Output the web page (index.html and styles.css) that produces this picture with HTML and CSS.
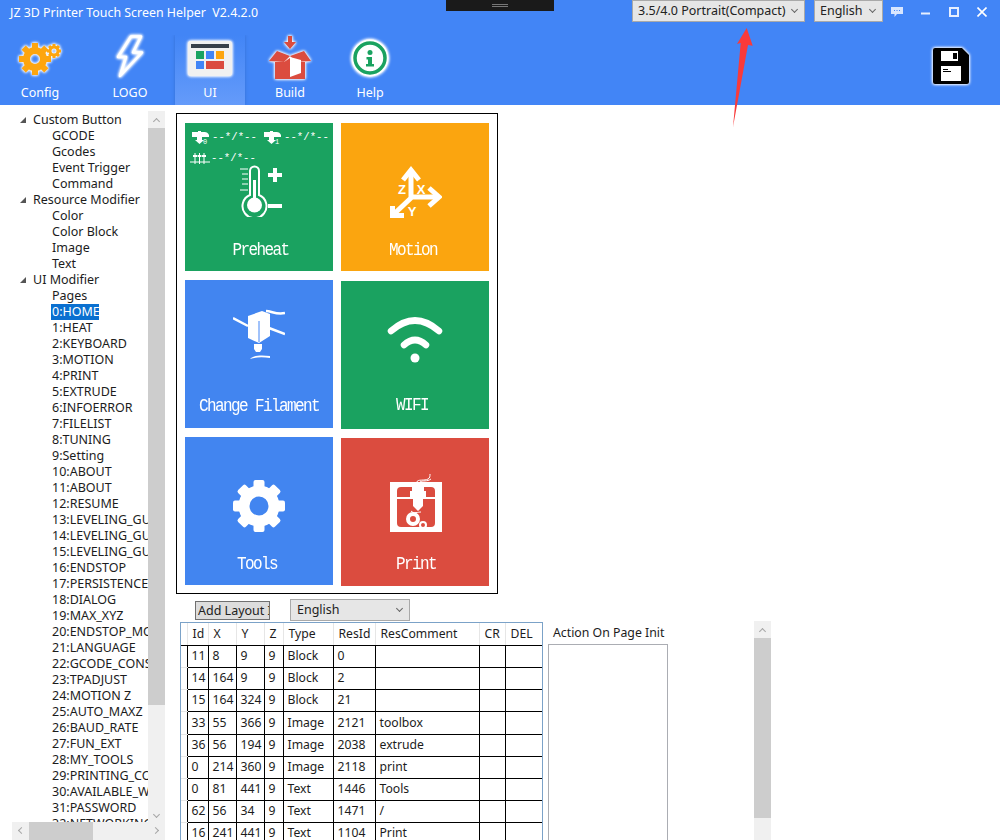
FILE: index.html
```html
<!DOCTYPE html>
<html lang="en">
<head>
  <meta charset="UTF-8" />
  <title>JZ 3D Printer Touch Screen Helper</title>
  <link rel="stylesheet" href="styles.css">
</head>
<body>

  <header class="header">
    <div class="titlebar">
      <span class="app-title">JZ 3D Printer Touch Screen Helper  V2.4.2.0</span>
      <div class="combo combo-layout">3.5/4.0 Portrait(Compact)<i class="chev"></i></div>
      <div class="combo combo-lang">English<i class="chev"></i></div>
      <div class="win-buttons">
        <svg width="12" height="10" viewBox="0 0 12 10"><path d="M0 0h12v7H6L3.500 10V7H0z" fill="#d8e6ff"/><path d="M3 3.500h1M5.500 3.500h1M8 3.500h1" stroke="#4285f6"/></svg>
        <svg width="10" height="10" viewBox="0 0 10 10"><path d="M0 6.500h9" stroke="#e6efff" stroke-width="2"/></svg>
        <svg width="10" height="10" viewBox="0 0 10 10"><rect x="1" y="1" width="8" height="8" fill="none" stroke="#e6efff" stroke-width="2"/></svg>
        <svg width="10" height="10" viewBox="0 0 10 10"><path d="M.5.500l9 9M9.500.500l-9 9" stroke="#fff" stroke-width="1.600"/></svg>
      </div>
    </div>

    <nav class="toolbar">
      <a class="tool tool-config">
        <svg class="glow" width="46" height="40" viewBox="0 0 46 40">
          <g transform="translate(18 22)" fill="#fda50f">
            <circle r="8.500" fill="none" stroke="#fda50f" stroke-width="7"/>
            <rect x="-3" y="-16" width="6" height="6"/><rect x="-3" y="10" width="6" height="6"/>
            <rect x="-16" y="-3" width="6" height="6"/><rect x="10" y="-3" width="6" height="6"/>
            <rect x="-3" y="-16" width="6" height="6" transform="rotate(45)"/><rect x="-3" y="10" width="6" height="6" transform="rotate(45)"/>
            <rect x="-16" y="-3" width="6" height="6" transform="rotate(45)"/><rect x="10" y="-3" width="6" height="6" transform="rotate(45)"/>
          </g>
          <g transform="translate(37 14)" fill="#fda50f">
            <circle r="4" fill="none" stroke="#fda50f" stroke-width="3"/>
            <rect x="-1.500" y="-7" width="3" height="3"/><rect x="-1.500" y="4" width="3" height="3"/>
            <rect x="-7" y="-1.500" width="3" height="3"/><rect x="4" y="-1.500" width="3" height="3"/>
            <rect x="-1.500" y="-7" width="3" height="3" transform="rotate(45)"/><rect x="-1.500" y="4" width="3" height="3" transform="rotate(45)"/>
            <rect x="-7" y="-1.500" width="3" height="3" transform="rotate(45)"/><rect x="4" y="-1.500" width="3" height="3" transform="rotate(45)"/>
          </g>
        </svg>
        <span>Config</span>
      </a>
      <a class="tool">
        <svg class="glow" width="30" height="44" viewBox="0 0 30 44">
          <path d="M16 1.500h10l-8 16h9L5 41l6-19H3z" fill="none" stroke="#fff" stroke-width="2.500" stroke-linejoin="round"/>
        </svg>
        <span>LOGO</span>
      </a>
      <a class="tool active tool-down">
        <svg class="glow" width="44" height="36" viewBox="0 0 44 36">
          <rect width="44" height="35" rx="3" fill="#f1f1f1"/>
          <rect x="3" y="3" width="38" height="4" fill="#37404a"/>
          <rect x="8" y="10" width="8" height="8" fill="#1aa260"/>
          <rect x="18" y="10" width="8" height="8" fill="#4285f6"/>
          <rect x="28" y="10" width="8" height="8" fill="#fda50f"/>
          <rect x="8" y="20" width="8" height="8" fill="#4285f6"/>
          <rect x="18" y="20" width="18" height="8" fill="#db4c3f"/>
        </svg>
        <span>UI</span>
      </a>
      <a class="tool tool-build">
        <svg class="glow" width="44" height="44" viewBox="0 0 44 44">
          <path d="M20 0h4v6h4l-6 7-6-7h4z" fill="#db4c3f"/>
          <path d="M1 25l8-10 13 5-6 6zM43 25l-7-10-14 5 6 6z" fill="#db4c3f"/>
          <path d="M7 26h9l6-4v21H7z" fill="#db4c3f"/>
          <path d="M22 22l6 4h9v17H22z" fill="#db4c3f"/>
          <path d="M22 21l11 3v13l-11 4z" fill="#fff"/>
        </svg>
        <span>Build</span>
      </a>
      <a class="tool tool-build">
        <svg class="glow" width="38" height="40" viewBox="0 0 38 40">
          <circle cx="19" cy="20" r="18.500" fill="#fff"/>
          <circle cx="19" cy="20" r="15" fill="none" stroke="#1aa260" stroke-width="3.500"/>
          <circle cx="19" cy="14.500" r="2.500" fill="#1aa260"/>
          <path d="M15.500 19h5.500v7h2v2.500h-8V26h2v-4.500h-1.500z" fill="#1aa260"/>
        </svg>
        <span>Help</span>
      </a>
      <svg class="save glow" width="36" height="36" viewBox="0 0 36 36">
        <path d="M0 2a2 2 0 0 1 2-2h27l7 7v27a2 2 0 0 1-2 2H2a2 2 0 0 1-2-2z" fill="#000"/>
        <rect x="8" y="3" width="17" height="10" fill="#fff"/>
        <rect x="20" y="5" width="4" height="6" fill="#000"/>
        <rect x="8" y="18" width="20" height="15" fill="#fff"/>
        <path d="M10 21.500h5M10 23.500h8" stroke="#000"/>
      </svg>
    </nav>
  </header>

  <!-- red arrow drawn on the screenshot -->
  <svg class="arrow" width="30" height="105" viewBox="0 0 30 105">
    <path d="M18.700 3L24.700 20.700 20 20 5 102 12.700 18 9 19z" fill="#f93a3a"/>
  </svg>
  <div class="black-tab"><i></i></div>

  <main class="main">
    <aside class="tree">
      <ul class="tree-list">
        <li class="parent">Custom Button</li>
        <li>GCODE</li>
        <li>Gcodes</li>
        <li>Event Trigger</li>
        <li>Command</li>
        <li class="parent">Resource Modifier</li>
        <li>Color</li>
        <li>Color Block</li>
        <li>Image</li>
        <li>Text</li>
        <li class="parent">UI Modifier</li>
        <li>Pages</li>
        <li><span class="selected">0:HOME</span></li>
        <li>1:HEAT</li>
        <li>2:KEYBOARD</li>
        <li>3:MOTION</li>
        <li>4:PRINT</li>
        <li>5:EXTRUDE</li>
        <li>6:INFOERROR</li>
        <li>7:FILELIST</li>
        <li>8:TUNING</li>
        <li>9:Setting</li>
        <li>10:ABOUT</li>
        <li>11:ABOUT</li>
        <li>12:RESUME</li>
        <li>13:LEVELING_GUIDE</li>
        <li>14:LEVELING_GUIDE</li>
        <li>15:LEVELING_GUIDE</li>
        <li>16:ENDSTOP</li>
        <li>17:PERSISTENCE</li>
        <li>18:DIALOG</li>
        <li>19:MAX_XYZ</li>
        <li>20:ENDSTOP_MONITOR</li>
        <li>21:LANGUAGE</li>
        <li>22:GCODE_CONSOLE</li>
        <li>23:TPADJUST</li>
        <li>24:MOTION Z</li>
        <li>25:AUTO_MAXZ</li>
        <li>26:BAUD_RATE</li>
        <li>27:FUN_EXT</li>
        <li>28:MY_TOOLS</li>
        <li>29:PRINTING_CONTROL</li>
        <li>30:AVAILABLE_WIFI</li>
        <li>31:PASSWORD</li>
        <li>32:NETWORKING</li>
      </ul>
      <div class="vbar tree-vbar">
        <b class="bar-btn"><i class="chev up"></i></b>
        <b class="bar-thumb"></b>
        <b class="bar-rest"></b>
        <b class="bar-btn"><i class="chev"></i></b>
      </div>
      <div class="hbar">
        <b class="bar-btn"><i class="chev left"></i></b>
        <b class="hbar-thumb"></b>
        <b class="bar-rest"></b>
        <b class="bar-btn"><i class="chev right"></i></b>
      </div>
    </aside>

    <section class="editor">
      <div class="screen">
        <div class="screen-col">
          <div class="tile green preheat">
            <div class="status">
              <svg width="17" height="13" viewBox="0 0 17 13"><path d="M0 1h6V0h3v1h3a5 5 0 0 1 5 3v2H0zM5 6h5v3h2l-4.500 4L3 9h2z" fill="#fff"/><text class="nozzle-no" x="11" y="13">0</text></svg><span class="st-a">--*/*--</span>
              <svg width="17" height="13" viewBox="0 0 17 13"><path d="M0 1h6V0h3v1h3a5 5 0 0 1 5 3v2H0zM5 6h5v3h2l-4.500 4L3 9h2z" fill="#fff"/><text class="nozzle-no" x="11" y="13">1</text></svg><span>--*/*--</span>
              <svg class="st-bed" width="20" height="12" viewBox="0 0 20 12"><path d="M0 9h20M5 0v11M9.500 0v11M14 0v11" stroke="#fff"/><path d="M3 3h4M7.500 3h4M12 3h4" stroke="#fff" stroke-width="2"/></svg><span>--*/*--</span>
            </div>
            <svg class="icon" width="52" height="52" viewBox="0 0 52 52">
              <path d="M14 30V6a4.500 4.500 0 0 1 9 0v24a12 12 0 1 1-9 0z" fill="none" stroke="#fff" stroke-width="2"/>
              <circle cx="18.500" cy="40" r="7.500" fill="#fff"/>
              <path d="M18.500 15v20" stroke="#fff" stroke-width="3"/>
              <path d="M4 4h8M6 9h6M6 14h6M6 19h6M4 25h8" stroke="#fff"/>
              <path d="M39 3v14M32 10h14M32 41h14" stroke="#fff" stroke-width="4"/>
            </svg>
            <span class="tile-label">Preheat</span>
          </div>
          <div class="tile blue filament">
            <svg class="icon" width="52" height="52" viewBox="0 0 52 52">
              <path d="M0 10l15 8M36 20l16 6M33 3c6 0 10 4 19 2" fill="none" stroke="#fff" stroke-width="2.500"/>
              <path d="M15 8l14-5 8 3v22l-11 7-11-5z" fill="#fff"/>
              <path d="M26 13v21" stroke="#4285f6"/>
              <path d="M21 36h8v5l-2 3h-4l-2-3z" fill="#fff"/>
              <path d="M17 51c3-4 12-4 20-3v2c-7-1-14-1-20 1z" fill="#fff"/>
            </svg>
            <span class="tile-label">Change Filament</span>
          </div>
          <div class="tile blue tools">
            <svg class="icon" width="52" height="52" viewBox="0 0 52 52">
              <circle cx="26" cy="26" r="15" fill="none" stroke="#fff" stroke-width="11"/>
              <g fill="#fff">
                <rect x="20.500" y="0" width="11" height="10" rx="2"/><rect x="20.500" y="42" width="11" height="10" rx="2"/>
                <rect x="0" y="20.500" width="10" height="11" rx="2"/><rect x="42" y="20.500" width="10" height="11" rx="2"/>
                <g transform="rotate(45 26 26)">
                  <rect x="20.500" y="0" width="11" height="10" rx="2"/><rect x="20.500" y="42" width="11" height="10" rx="2"/>
                  <rect x="0" y="20.500" width="10" height="11" rx="2"/><rect x="42" y="20.500" width="10" height="11" rx="2"/>
                </g>
              </g>
            </svg>
            <span class="tile-label">Tools</span>
          </div>
        </div>
        <div class="screen-col">
          <div class="tile orange motion">
            <svg class="icon" width="52" height="52" viewBox="0 0 52 52">
              <g fill="none" stroke="#fff" stroke-width="5">
                <path d="M21 4v28L4 48M21 31h28"/>
                <path d="M13 14l8-10 8 10M39 22l10 9-10 9"/>
                <path d="M2.500 40v9.500H14"/>
              </g>
              <g class="axis-text">
                <text x="12" y="28">Z</text>
                <text x="31" y="28">X</text>
                <text x="22" y="50">Y</text>
              </g>
            </svg>
            <span class="tile-label">Motion</span>
          </div>
          <div class="tile green wifi">
            <svg class="icon" width="60" height="50" viewBox="0 0 60 50">
              <g fill="none" stroke="#fff" stroke-width="6.500" stroke-linecap="round">
                <path d="M6 17Q30-4 54 17"/>
                <path d="M19 31Q30 21 41 31"/>
              </g>
              <circle cx="30" cy="44" r="4.500" fill="#fff"/>
            </svg>
            <span class="tile-label">WIFI</span>
          </div>
          <div class="tile red print">
            <svg class="icon" width="52" height="58" viewBox="0 0 52 58">
              <path d="M27 8c0-3 8-1 11-3 2-1 2-3 2-5M30 8c3-2 7 0 11-3" fill="none" stroke="#fff"/>
              <rect y="8" width="52" height="50" fill="#fff"/>
              <rect x="7" y="13" width="38" height="40" rx="4" fill="#db4c3f"/>
              <rect x="7" y="23" width="38" height="2" fill="#fff"/>
              <path d="M22 13h12v4h2v8h-3v7l-5 5-5-5v-7h-3v-8h2z" fill="#fff"/>
              <circle cx="23" cy="45" r="5" fill="none" stroke="#fff" stroke-width="4"/>
              <circle cx="33" cy="51" r="3" fill="none" stroke="#fff" stroke-width="2"/>
              <path d="M21 37c3 3 7 1 10 1" fill="none" stroke="#fff"/>
            </svg>
            <span class="tile-label">Print</span>
          </div>
        </div>
      </div>

      <div class="layout-bar">
        <button class="add-btn">Add Layout I</button>
        <div class="combo combo-page">English<i class="chev"></i></div>
      </div>

      <div class="lower">
        <div class="table-wrap">
          <table class="layout-table">
            <colgroup>
              <col class="c-gutter"><col class="c-id"><col class="c-x"><col class="c-y"><col class="c-z"><col class="c-type"><col class="c-res"><col class="c-comment"><col class="c-cr"><col class="c-del">
            </colgroup>
            <thead>
              <tr><th></th><th>Id</th><th>X</th><th>Y</th><th>Z</th><th>Type</th><th>ResId</th><th>ResComment</th><th>CR</th><th>DEL</th></tr>
            </thead>
            <tbody>
              <tr><th></th><td>11</td><td>8</td><td>9</td><td>9</td><td>Block</td><td>0</td><td></td><td></td><td></td></tr>
              <tr><th></th><td>14</td><td>164</td><td>9</td><td>9</td><td>Block</td><td>2</td><td></td><td></td><td></td></tr>
              <tr><th></th><td>15</td><td>164</td><td>324</td><td>9</td><td>Block</td><td>21</td><td></td><td></td><td></td></tr>
              <tr class="tall"><th></th><td>33</td><td>55</td><td>366</td><td>9</td><td>Image</td><td>2121</td><td>toolbox</td><td></td><td></td></tr>
              <tr><th></th><td>36</td><td>56</td><td>194</td><td>9</td><td>Image</td><td>2038</td><td>extrude</td><td></td><td></td></tr>
              <tr><th></th><td>0</td><td>214</td><td>360</td><td>9</td><td>Image</td><td>2118</td><td>print</td><td></td><td></td></tr>
              <tr><th></th><td>0</td><td>81</td><td>441</td><td>9</td><td>Text</td><td>1446</td><td>Tools</td><td></td><td></td></tr>
              <tr><th></th><td>62</td><td>56</td><td>34</td><td>9</td><td>Text</td><td>1471</td><td>/</td><td></td><td></td></tr>
              <tr><th></th><td>16</td><td>241</td><td>441</td><td>9</td><td>Text</td><td>1104</td><td>Print</td><td></td><td></td></tr>
            </tbody>
          </table>
        </div>

        <div class="action">
          <label>Action On Page Init</label>
          <div class="action-box"></div>
        </div>

        <div class="vbar page-vbar">
          <b class="bar-btn"><i class="chev up"></i></b>
          <b class="bar-thumb"></b>
          <b class="bar-rest"></b>
        </div>
      </div>
    </section>
  </main>

</body>
</html>
```

FILE: styles.css
```css
* {
  box-sizing: border-box;
}

html, body {
  height: 840px;
  overflow: hidden;
}

body {
  margin: 0;
  background-color: #ffffff;
  color: #1c1c1c;
  font-family: "Noto Sans", sans-serif;
  font-size: 12.5px;
  display: flex;
  flex-direction: column;
}

.header {
  background-color: #4285f6;
  height: 105px;
  flex: none;
}

.titlebar {
  display: flex;
  height: 35px;
  align-items: flex-start;
}

.app-title {
  color: #ffffff;
  font-size: 12.4px;
  white-space: pre;
  padding: 4px 0 0 10px;
  width: 632px;
  line-height: 18px;
}

.combo {
  position: relative;
  background-color: #e6e6e6;
  border: 1px solid #a9a9a9;
  color: #222;
  height: 22px;
  line-height: 19px;
  font-size: 12.5px;
  padding-left: 5px;
}

.combo-layout {
  width: 173px;
}

.combo-lang {
  width: 69px;
  margin-left: 9px;
}

.chev {
  position: absolute;
  top: 6px;
  right: 7px;
  width: 5px;
  height: 5px;
  border-right: 1px solid #666;
  border-bottom: 1px solid #666;
  transform: rotate(45deg);
}

.win-buttons {
  display: flex;
  align-items: center;
  gap: 18px;
  margin-left: 8px;
  padding-top: 7px;
}

.toolbar {
  display: flex;
  height: 70px;
  gap: 10px;
  padding-left: 5px;
}

.tool {
  width: 70px;
  height: 70px;
  display: flex;
  flex-direction: column;
  align-items: center;
  color: #ffffff;
  font-size: 12.5px;
  position: relative;
}

.tool svg {
  height: 44px;
  flex: none;
}

.tool span {
  position: absolute;
  bottom: 3px;
  line-height: 18px;
}

.tool-config {
  margin-right: 10px;
}

.tool-down svg {
  margin-top: 2px;
}

.tool-build svg {
  margin-top: 1px;
}

.active {
  background: linear-gradient(#4285f6, #659bfa);
  box-shadow: 0 0 3px rgba(30, 70, 150, 0.35);
  clip-path: inset(0 -4px 0 -4px);
}

.glow {
  filter: drop-shadow(0 0 1.5px #ffffff) drop-shadow(0 0 1px #ffffff);
}

.save {
  margin: 13px 0 0 518px;
}

.arrow {
  position: absolute;
  left: 728px;
  top: 25px;
}

.black-tab {
  position: absolute;
  left: 446px;
  top: 0;
  width: 108px;
  height: 11px;
  background-color: #1a1a1a;
}

.black-tab i {
  display: block;
  width: 16px;
  height: 3px;
  margin: 4px auto 0;
  border-top: 1px solid #777;
  border-bottom: 1px solid #777;
}

.main {
  display: flex;
  flex: 1;
  min-height: 0;
}

/* left tree */
.tree {
  width: 165px;
  margin: 6px 0 0 12px;
  flex: none;
  display: grid;
  grid-template-columns: 136px 17px;
  grid-template-rows: 711px 18px;
  overflow: hidden;
}

.tree-list {
  list-style: none;
  margin: 0;
  padding: 1px 0 0;
  overflow: hidden;
  width: 136px;
  height: 711px;
}

.tree-list li {
  height: 16px;
  line-height: 16px;
  padding-left: 40px;
  white-space: nowrap;
}

.tree-list .parent {
  padding-left: 21px;
  position: relative;
}

.tree-list .parent::before {
  content: "";
  position: absolute;
  left: 8px;
  top: 5px;
  width: 6px;
  height: 6px;
  background-color: #555;
  clip-path: polygon(100% 0, 100% 100%, 0 100%);
}

.selected {
  display: inline-block;
  background-color: #0a70d0;
  color: #ffffff;
  margin-left: -1px;
  padding-left: 1px;
  width: 48px;
  overflow: hidden;
}

.vbar {
  display: flex;
  flex-direction: column;
  background-color: #f0f0f0;
  width: 17px;
}

.bar-btn {
  display: block;
  position: relative;
  flex: none;
  width: 17px;
  height: 17px;
}

.bar-btn .chev {
  top: 7px;
  right: 6px;
  border-color: #a6a6a6;
}

.bar-btn .up {
  top: 8px;
  transform: rotate(225deg);
}

.bar-btn .left {
  top: 6px;
  right: 5px;
  transform: rotate(135deg);
}

.bar-btn .right {
  top: 6px;
  right: 7px;
  transform: rotate(-45deg);
}

.bar-thumb {
  background-color: #cdcdcd;
  display: block;
  flex: none;
}

.bar-rest {
  display: block;
  flex: 1;
}

.tree-vbar .bar-thumb {
  height: 577px;
}

.hbar {
  grid-column: 1 / 3;
  display: flex;
  background-color: #f0f0f0;
  height: 18px;
}

.hbar-thumb {
  display: block;
  background-color: #cdcdcd;
  width: 64px;
}

/* emulated touch screen */
.editor {
  flex: 1;
  min-width: 0;
  display: flex;
  flex-direction: column;
  padding: 8px 0 0 0;
  margin-left: -1px;
}

.screen {
  width: 322px;
  height: 481px;
  border: 1px solid #000;
  display: flex;
  gap: 8px;
  padding: 9px 8px;
  flex: none;
}

.screen-col {
  display: flex;
  flex-direction: column;
  gap: 9px;
  width: 148px;
}

.screen-col:last-child .tile:nth-child(2) {
  margin-top: 1px;
}

.tile {
  width: 148px;
  height: 148px;
  flex: none;
  color: #ffffff;
  display: flex;
  flex-direction: column;
  align-items: center;
}

.green { background-color: #1aa260; }
.blue { background-color: #4285f0; }
.orange { background-color: #fba50f; }
.red { background-color: #db4c3f; }

.tile-label {
  font-family: "Liberation Mono", monospace;
  font-size: 16px;
  line-height: 18px;
  letter-spacing: -1.6px;
  white-space: nowrap;
  transform: scaleY(1.15);
}

.status {
  align-self: stretch;
  display: flex;
  flex-wrap: wrap;
  align-items: center;
  height: 34px;
  padding: 8px 0 0 7px;
  font-family: "Liberation Mono", monospace;
  font-size: 10.7px;
  line-height: 13px;
  margin-bottom: 8px;
}

.status svg {
  margin-right: 3px;
}

.status span {
  width: 45px;
  height: 13px;
}

.status .st-a {
  margin-right: 7px;
}

.status .st-bed {
  margin: 8px 1px 0 -2px;
}

.status .st-bed + span {
  margin-top: 8px;
}

.nozzle-no {
  font-family: "Liberation Mono", monospace;
  font-size: 7px;
  fill: #ffffff;
}

.preheat .icon { margin-left: 6px; }
.preheat .tile-label { margin: 24px 0 0 3px; }

.motion .icon { margin: 43px 0 0 2px; }
.motion .tile-label { margin: 23px 0 0 -4px; }

.filament .icon { margin: 28px 0 0 0; }
.filament .tile-label { margin: 37px 0 0 0; }

.wifi .icon { margin: 33px 0 0 0; }
.wifi .tile-label { margin: 32px 0 0 -6px; }

.tools .icon { margin: 43px 0 0 -1px; }
.tools .tile-label { margin: 23px 0 0 -4px; }

.print .icon { margin: 36px 0 0 2px; }
.print .tile-label { margin: 23px 0 0 2px; }

.axis-text {
  font-family: "Liberation Sans", sans-serif;
  font-size: 13px;
  font-weight: bold;
  fill: #ffffff;
  text-anchor: middle;
}

.layout-bar {
  display: flex;
  align-items: center;
  height: 22px;
  margin: 5px 0 0 19px;
  flex: none;
}

.add-btn {
  width: 75px;
  height: 19px;
  padding: 1px 0 0 2px;
  text-align: left;
  background-color: #dddddd;
  border: 1px solid #707070;
  color: #222;
  font-family: "Noto Sans", sans-serif;
  font-size: 12.5px;
  line-height: 16px;
  overflow: hidden;
  white-space: nowrap;
}

.combo-page {
  width: 120px;
  margin-left: 20px;
  padding-left: 6px;
  line-height: 20px;
}

.lower {
  display: flex;
  flex: 1;
  min-height: 0;
  margin: 1px 0 0 4px;
}

.table-wrap {
  width: 363px;
  border: 1px solid #7ba2c8;
  border-bottom: 0;
  overflow: hidden;
  flex: none;
}

.layout-table {
  table-layout: fixed;
  border-collapse: collapse;
  width: 361px;
  font-size: 12.2px;
}

.c-gutter { width: 6px; }
.c-id { width: 21px; }
.c-x { width: 28px; }
.c-y { width: 28px; }
.c-z { width: 19px; }
.c-type { width: 50px; }
.c-res { width: 42px; }
.c-comment { width: 104px; }
.c-cr { width: 26px; }
.c-del { width: 37px; }

.layout-table thead th {
  height: 22px;
  font-weight: normal;
  text-align: left;
  padding: 0 0 1px 5px;
  border-right: 1px solid #e6e6e6;
  border-bottom: 1px solid #000;
  white-space: nowrap;
  overflow: hidden;
}

.layout-table tbody tr {
  height: 22px;
}

.layout-table tbody .tall {
  height: 23px;
}

.layout-table tbody th {
  border-bottom: 1px solid #e6e6e6;
  padding: 0;
}

.layout-table td {
  border: 1px solid #000;
  padding: 0 0 1px 4px;
  white-space: nowrap;
  overflow: hidden;
}

.action {
  width: 120px;
  margin-left: 5px;
  display: flex;
  flex-direction: column;
  flex: none;
}

.action label {
  height: 22px;
  line-height: 22px;
  padding-left: 5px;
  font-size: 12.3px;
  white-space: nowrap;
}

.action-box {
  flex: 1;
  border: 1px solid #abadb3;
  border-bottom: 0;
}

.page-vbar {
  margin-left: 86px;
  margin-top: -1px;
}

.page-vbar .bar-thumb {
  height: 180px;
}
```
